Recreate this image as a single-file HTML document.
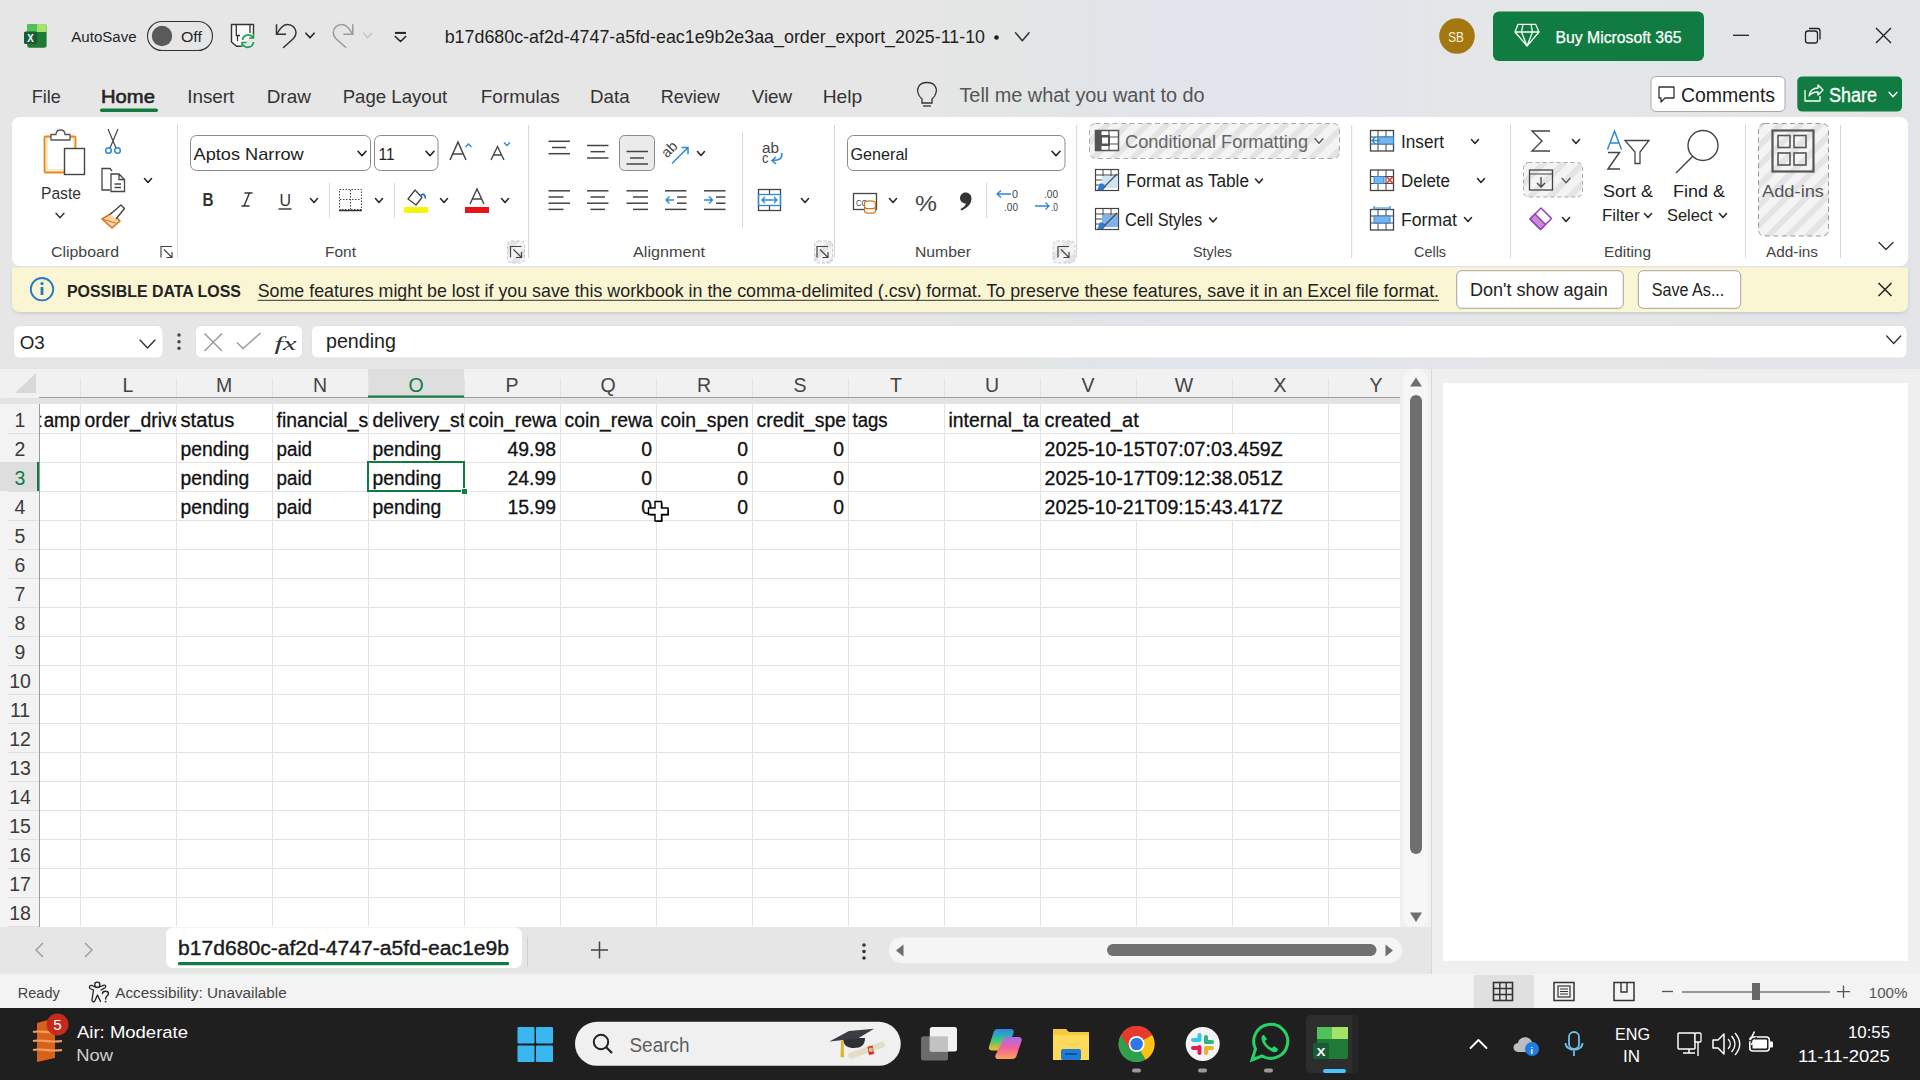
<!DOCTYPE html>
<html><head><meta charset="utf-8"><title>Excel</title><style>html,body{margin:0;padding:0;width:1920px;height:1080px;overflow:hidden;background:#e6e6e6}svg{display:block}</style></head><body>
<svg width="1920" height="1080" viewBox="0 0 1920 1080" font-family="Liberation Sans">
<defs>
<linearGradient id="bg" x1="0" y1="0" x2="1" y2="0">
 <stop offset="0" stop-color="#e6e6e6"/><stop offset="0.46" stop-color="#e6e6e6"/><stop offset="0.52" stop-color="#e3e6e4"/>
 <stop offset="0.6" stop-color="#e1e4ea"/><stop offset="0.7" stop-color="#e2e5eb"/><stop offset="0.8" stop-color="#e5e6e7"/><stop offset="1" stop-color="#e3e4e8"/>
</linearGradient>
<pattern id="stripes" patternUnits="userSpaceOnUse" width="14" height="14" patternTransform="rotate(45)">
 <rect width="14" height="14" fill="#f4f4f4"/><rect width="6" height="14" fill="#e4e4e4"/>
</pattern>
<clipPath id="gridclip"><rect x="39" y="404" width="1361" height="523"/></clipPath>
</defs>
<rect x="0" y="0" width="1920" height="1080" rx="0" fill="url(#bg)" />
<rect x="27.2" y="24" width="19.4" height="23.8" rx="2.5" fill="#1f7a35" />
<rect x="27.2" y="24" width="9.7" height="8" rx="0" fill="#4fc35a" />
<path d="M36.9,24 H44.1 A2.5,2.5 0 0 1 46.6,26.5 V32 H36.9 Z" stroke="none" stroke-width="1" fill="#a5e26a" />
<path d="M29.7,24 H36.9 V32 H27.2 V26.5 A2.5,2.5 0 0 1 29.7,24 Z" stroke="none" stroke-width="1" fill="#52c15b" />
<rect x="24" y="31.6" width="13.2" height="12.4" rx="1.5" fill="#185c37" />
<text x="27.30" y="42" font-size="10.5" fill="#fff" font-family="Liberation Sans" font-weight="bold" textLength="6.47" lengthAdjust="spacingAndGlyphs" >X</text>
<text x="71.25" y="41.9" font-size="15.3" fill="#262626" font-family="Liberation Sans" textLength="65.44" lengthAdjust="spacingAndGlyphs" >AutoSave</text>
<rect x="147.5" y="21.5" width="65" height="29" rx="14.5" fill="none" stroke="#333" stroke-width="1.1" />
<circle cx="162" cy="36" r="10.2" fill="#5a5a5a" />
<text x="181.00" y="41.9" font-size="15.3" fill="#262626" font-family="Liberation Sans" textLength="20.93" lengthAdjust="spacingAndGlyphs" >Off</text>
<path d="M241,46.3 H236.5 L231.5,42 V24.5 H253.5 V34" stroke="#333" stroke-width="1.4" fill="#fafafa" stroke-linejoin="round"/>
<path d="M236.3,24.5 V35.5 H240 M250,24.5 V33" stroke="#333" stroke-width="1.3" fill="none" />
<path d="M237.5,35.5 V41" stroke="#333" stroke-width="1.2" fill="none" />
<path d="M242.5,40 A5.8,5.8 0 0 1 253,37.5 M253.5,42 A5.8,5.8 0 0 1 242.5,44" stroke="#1f9d55" stroke-width="1.7" fill="none" />
<path d="M253.5,33.5 V38 H249 M242,47 V42.5 H246.5" stroke="#1f9d55" stroke-width="1.6" fill="none" />
<path d="M276.5,24.2 V34.3 H286" stroke="#333" stroke-width="1.5" fill="none" stroke-linejoin="miter"/>
<path d="M276.8,34 C280,28 283.5,24.5 287.5,24.5 C292.5,24.5 296,28.5 296,32.5 C296,35.5 295,37 293.5,38.5 L283.5,47.5" stroke="#333" stroke-width="1.5" fill="none" stroke-linecap="round"/>
<path d="M305.85,33.15 L310,37.85 L314.15,33.15" stroke="#222" stroke-width="1.5" fill="none" stroke-linecap="round" stroke-linejoin="round"/>
<path d="M352.8,24.2 V34.3 H343.3" stroke="#999" stroke-width="1.5" fill="none" stroke-linejoin="miter"/>
<path d="M352.5,34 C349.3,28 345.8,24.5 341.8,24.5 C336.8,24.5 333.3,28.5 333.3,32.5 C333.3,35.5 334.3,37 335.8,38.5 L345.8,47.5" stroke="#999" stroke-width="1.5" fill="none" stroke-linecap="round"/>
<path d="M363.5,33.25 L367.5,37.75 L371.5,33.25" stroke="#c4c4c4" stroke-width="1.3" fill="none" stroke-linecap="round" stroke-linejoin="round"/>
<line x1="395" y1="32.9" x2="406" y2="32.9" stroke="#222" stroke-width="2" />
<path d="M395.25,36.5 L400.5,41.5 L405.75,36.5" stroke="#222" stroke-width="1.6" fill="none" stroke-linecap="round" stroke-linejoin="round"/>
<text x="444.70" y="42.8" font-size="18.5" fill="#1f1f1f" font-family="Liberation Sans" textLength="540.30" lengthAdjust="spacingAndGlyphs" >b17d680c-af2d-4747-a5fd-eac1e9b2e3aa_order_export_2025-11-10</text>
<circle cx="996.5" cy="37.5" r="2.3" fill="#1f1f1f" />
<path d="M1015.55,32.8 L1022.3,40.8 L1029.05,32.8" stroke="#333" stroke-width="1.5" fill="none" stroke-linecap="round" stroke-linejoin="round"/>
<circle cx="1457" cy="36" r="17.8" fill="#a47810" />
<text x="1448.30" y="41.8" font-size="15.2" fill="#f7efd8" font-family="Liberation Sans" textLength="15.65" lengthAdjust="spacingAndGlyphs" >SB</text>
<rect x="1493" y="11.4" width="211" height="49.6" rx="6" fill="#117c41" />
<path d="M1518,24.3 H1535.6 L1539,32 L1527,46 L1515,32 Z M1515,32 H1539 M1523,24.3 L1521.5,32 L1527,46 L1532.5,32 L1531,24.3" stroke="#f2fff6" stroke-width="1.3" fill="none" stroke-linejoin="round"/>
<text x="1555.50" y="42.5" font-size="16.5" fill="#fff" font-family="Liberation Sans" textLength="126.05" lengthAdjust="spacingAndGlyphs" stroke="#fff" stroke-width="0.25">Buy Microsoft 365</text>
<line x1="1733" y1="35.3" x2="1749" y2="35.3" stroke="#222" stroke-width="1.3" />
<rect x="1805.5" y="31" width="12" height="12" rx="2.5" fill="none" stroke="#222" stroke-width="1.3" />
<path d="M1809,28.5 H1817.5 A2.5,2.5 0 0 1 1820,31 V39.5" stroke="#222" stroke-width="1.3" fill="none" />
<path d="M1876,28 L1891,43 M1891,28 L1876,43" stroke="#222" stroke-width="1.4" fill="none" />
<text x="31.70" y="102.5" font-size="19" fill="#333" font-family="Liberation Sans" textLength="29.02" lengthAdjust="spacingAndGlyphs" >File</text>
<text x="187.30" y="102.5" font-size="19" fill="#333" font-family="Liberation Sans" textLength="47.01" lengthAdjust="spacingAndGlyphs" >Insert</text>
<text x="266.70" y="102.5" font-size="19" fill="#333" font-family="Liberation Sans" textLength="44.18" lengthAdjust="spacingAndGlyphs" >Draw</text>
<text x="342.70" y="102.5" font-size="19" fill="#333" font-family="Liberation Sans" textLength="104.51" lengthAdjust="spacingAndGlyphs" >Page Layout</text>
<text x="480.80" y="102.5" font-size="19" fill="#333" font-family="Liberation Sans" textLength="78.85" lengthAdjust="spacingAndGlyphs" >Formulas</text>
<text x="590.00" y="102.5" font-size="19" fill="#333" font-family="Liberation Sans" textLength="39.55" lengthAdjust="spacingAndGlyphs" >Data</text>
<text x="660.80" y="102.5" font-size="19" fill="#333" font-family="Liberation Sans" textLength="59.00" lengthAdjust="spacingAndGlyphs" >Review</text>
<text x="751.70" y="102.5" font-size="19" fill="#333" font-family="Liberation Sans" textLength="40.40" lengthAdjust="spacingAndGlyphs" >View</text>
<text x="822.70" y="102.5" font-size="19" fill="#333" font-family="Liberation Sans" textLength="39.53" lengthAdjust="spacingAndGlyphs" >Help</text>
<text x="101.00" y="102.5" font-size="19" fill="#222" font-family="Liberation Sans" textLength="53.95" lengthAdjust="spacingAndGlyphs" stroke="#222" stroke-width="0.55">Home</text>
<rect x="100" y="108.5" width="58" height="3.5" rx="1.7" fill="#107c41" />
<path d="M922,99 C917,95 917,89 918.5,87 C920,83.5 923.5,82.5 927,82.5 C930.5,82.5 934,83.5 935.5,87 C937,89 937,95 932,99 V103 H922 Z" stroke="#333" stroke-width="1.3" fill="none" />
<line x1="923" y1="106" x2="931" y2="106" stroke="#333" stroke-width="1.3" />
<text x="959.40" y="102" font-size="19.5" fill="#555" font-family="Liberation Sans" textLength="245.28" lengthAdjust="spacingAndGlyphs" >Tell me what you want to do</text>
<rect x="1651" y="76.5" width="134" height="35" rx="5" fill="#fff" stroke="#a8a8a8" stroke-width="1" />
<path d="M1659,87 H1674 V98 H1665 L1661,102 V98 H1659 Z" stroke="#333" stroke-width="1.3" fill="none" stroke-linejoin="round"/>
<text x="1681.00" y="102.4" font-size="19.5" fill="#222" font-family="Liberation Sans" textLength="94.08" lengthAdjust="spacingAndGlyphs" >Comments</text>
<rect x="1797.3" y="76.4" width="104.7" height="35.2" rx="5" fill="#117c41" />
<path d="M1805,90 V101 H1820 V96 M1809,96 C1810,90 1814,88 1818,88 V85 L1823,90 L1818,95 V92 C1814,92 1811,93 1809,96 Z" stroke="#fff" stroke-width="1.3" fill="none" stroke-linejoin="round"/>
<text x="1829.00" y="102.4" font-size="19.5" fill="#fff" font-family="Liberation Sans" textLength="47.97" lengthAdjust="spacingAndGlyphs" stroke="#fff" stroke-width="0.3">Share</text>
<path d="M1889.0,92.25 L1893,96.75 L1897.0,92.25" stroke="#fff" stroke-width="1.4" fill="none" stroke-linecap="round" stroke-linejoin="round"/>
<rect x="12" y="117" width="1896" height="149" rx="8" fill="#ffffff" />
<line x1="177.5" y1="125" x2="177.5" y2="258" stroke="#d6d6d6" stroke-width="1" />
<line x1="528.7" y1="125" x2="528.7" y2="258" stroke="#d6d6d6" stroke-width="1" />
<line x1="834.5" y1="125" x2="834.5" y2="258" stroke="#d6d6d6" stroke-width="1" />
<line x1="1076.7" y1="125" x2="1076.7" y2="258" stroke="#d6d6d6" stroke-width="1" />
<line x1="1351.7" y1="125" x2="1351.7" y2="258" stroke="#d6d6d6" stroke-width="1" />
<line x1="1510.5" y1="125" x2="1510.5" y2="258" stroke="#d6d6d6" stroke-width="1" />
<line x1="1745.5" y1="125" x2="1745.5" y2="258" stroke="#d6d6d6" stroke-width="1" />
<line x1="1840.5" y1="125" x2="1840.5" y2="258" stroke="#d6d6d6" stroke-width="1" />
<text x="51.00" y="256.7" font-size="15.3" fill="#444" font-family="Liberation Sans" textLength="68.00" lengthAdjust="spacingAndGlyphs" >Clipboard</text>
<text x="325.00" y="256.7" font-size="15.3" fill="#444" font-family="Liberation Sans" textLength="31.01" lengthAdjust="spacingAndGlyphs" >Font</text>
<text x="633.00" y="256.7" font-size="15.3" fill="#444" font-family="Liberation Sans" textLength="71.94" lengthAdjust="spacingAndGlyphs" >Alignment</text>
<text x="915.00" y="256.7" font-size="15.3" fill="#444" font-family="Liberation Sans" textLength="55.94" lengthAdjust="spacingAndGlyphs" >Number</text>
<text x="1193.00" y="256.7" font-size="15.3" fill="#444" font-family="Liberation Sans" textLength="39.04" lengthAdjust="spacingAndGlyphs" >Styles</text>
<text x="1414.00" y="256.7" font-size="15.3" fill="#444" font-family="Liberation Sans" textLength="32.04" lengthAdjust="spacingAndGlyphs" >Cells</text>
<text x="1604.00" y="256.7" font-size="15.3" fill="#444" font-family="Liberation Sans" textLength="46.96" lengthAdjust="spacingAndGlyphs" >Editing</text>
<text x="1766.00" y="256.7" font-size="15.3" fill="#444" font-family="Liberation Sans" textLength="52.01" lengthAdjust="spacingAndGlyphs" >Add-ins</text>
<path d="M161,257.5 V246.5 H172" stroke="#444" stroke-width="1.2" fill="none" />
<path d="M164,249.5 L172,257.5 M172,252.0 V257.5 H166.5" stroke="#444" stroke-width="1.2" fill="none" />
<rect x="507.5" y="241" width="17" height="22" rx="4" fill="url(#stripes)" stroke="#bbb" stroke-width="0.8" stroke-dasharray="3,2"/>
<path d="M510.5,257.5 V246.5 H521.5" stroke="#444" stroke-width="1.2" fill="none" />
<path d="M513.5,249.5 L521.5,257.5 M521.5,252.0 V257.5 H516.0" stroke="#444" stroke-width="1.2" fill="none" />
<rect x="814.5" y="241" width="18" height="22" rx="4" fill="url(#stripes)" stroke="#bbb" stroke-width="0.8" stroke-dasharray="3,2"/>
<path d="M817,257.5 V246.5 H828" stroke="#444" stroke-width="1.2" fill="none" />
<path d="M820,249.5 L828,257.5 M828,252.0 V257.5 H822.5" stroke="#444" stroke-width="1.2" fill="none" />
<rect x="1053" y="241" width="22" height="22" rx="4" fill="url(#stripes)" stroke="#bbb" stroke-width="0.8" stroke-dasharray="3,2"/>
<path d="M1058,257.5 V246.5 H1069" stroke="#444" stroke-width="1.2" fill="none" />
<path d="M1061,249.5 L1069,257.5 M1069,252.0 V257.5 H1063.5" stroke="#444" stroke-width="1.2" fill="none" />
<rect x="44.5" y="136.5" width="31" height="36" rx="1" fill="#fde9c4" stroke="#e8891c" stroke-width="1.8" />
<rect x="48" y="139" width="25" height="30" rx="0" fill="#fff" stroke="none" stroke-width="1" />
<path d="M51,140 V134.5 H56 C56,131 58,130 60.5,130 C63,130 65,131 65,134.5 H70 V140 Z" stroke="#555" stroke-width="1.3" fill="#fff" />
<rect x="64.5" y="148.5" width="20" height="26" rx="0" fill="#fff" stroke="#444" stroke-width="1.4" />
<text x="41.00" y="198.7" font-size="16.8" fill="#333" font-family="Liberation Sans" textLength="39.95" lengthAdjust="spacingAndGlyphs" >Paste</text>
<path d="M56.0,213.25 L60,217.75 L64.0,213.25" stroke="#333" stroke-width="1.4" fill="none" stroke-linecap="round" stroke-linejoin="round"/>
<path d="M108,129 L116,148 M118,129 L110,148" stroke="#444" stroke-width="1.2" fill="none" />
<circle cx="108.5" cy="150.5" r="2.8" fill="none" stroke="#2b88d8" stroke-width="1.5" />
<circle cx="117.5" cy="150.5" r="2.8" fill="none" stroke="#2b88d8" stroke-width="1.5" />
<path d="M110,190 H102 V168.5 H110 L112,171" stroke="#444" stroke-width="1.3" fill="none" />
<path d="M111,174 H119 L124.5,179.5 V191.5 H111 Z M119,174 V179.5 H124.5 M114.5,184 H121 M114.5,187.5 H121" stroke="#444" stroke-width="1.3" fill="none" />
<path d="M144.5,178.5 L148,182.5 L151.5,178.5" stroke="#2a2a2a" stroke-width="1.6" fill="none" stroke-linecap="round" stroke-linejoin="round"/>
<path d="M102,219 L112,213 L120,221 L112,228 Z" stroke="#d9731f" stroke-width="1.6" fill="#fbd3a6" stroke-linejoin="round"/>
<path d="M110,214.5 L121,205 L124.5,208.5 L116,219" stroke="#444" stroke-width="1.4" fill="#fff" stroke-linejoin="round"/>
<path d="M103,219.5 L116,223" stroke="#d9731f" stroke-width="1.2" fill="none" />
<rect x="190.5" y="135.5" width="180" height="35" rx="6" fill="#fff" stroke="#8a8a8a" stroke-width="1" />
<text x="193.50" y="159.7" font-size="17" fill="#222" font-family="Liberation Sans" textLength="110.27" lengthAdjust="spacingAndGlyphs" >Aptos Narrow</text>
<path d="M358.0,151.25 L362,155.75 L366.0,151.25" stroke="#222" stroke-width="1.6" fill="none" stroke-linecap="round" stroke-linejoin="round"/>
<rect x="374.5" y="135.5" width="63.5" height="35" rx="6" fill="#fff" stroke="#8a8a8a" stroke-width="1" />
<text x="378.50" y="159.7" font-size="17" fill="#222" font-family="Liberation Sans" textLength="15.97" lengthAdjust="spacingAndGlyphs" >11</text>
<path d="M426.0,151.25 L430,155.75 L434.0,151.25" stroke="#222" stroke-width="1.6" fill="none" stroke-linecap="round" stroke-linejoin="round"/>
<path d="M450,160 L458,142 L466,160 M452.5,154 H463.5" stroke="#444" stroke-width="1.5" fill="none" />
<path d="M465.5,147 L468.5,144 L471.5,147" stroke="#2b88d8" stroke-width="1.4" fill="none" />
<path d="M491,160 L497.5,146.5 L504,160 M493,155 H502" stroke="#444" stroke-width="1.4" fill="none" />
<path d="M504,142.5 L507,145.5 L510,142.5" stroke="#2b88d8" stroke-width="1.4" fill="none" />
<text x="202.50" y="206.3" font-size="18" fill="#333" font-family="Liberation Sans" font-weight="bold" textLength="11.03" lengthAdjust="spacingAndGlyphs" >B</text>
<path d="M244.5,193 H252.5 M241.5,206 H249.5 M249.5,193 L244,206" stroke="#333" stroke-width="1.4" fill="none" />
<text x="279.50" y="206" font-size="17" fill="#333" font-family="Liberation Sans" textLength="11.53" lengthAdjust="spacingAndGlyphs" >U</text>
<line x1="278.5" y1="209" x2="291.5" y2="209" stroke="#333" stroke-width="1.4" />
<path d="M310.5,198.5 L314,202.5 L317.5,198.5" stroke="#2a2a2a" stroke-width="1.6" fill="none" stroke-linecap="round" stroke-linejoin="round"/>
<line x1="329.5" y1="183" x2="329.5" y2="218" stroke="#d6d6d6" stroke-width="1" />
<rect x="339.5" y="189.5" width="22" height="20" rx="0" fill="none" stroke="#444" stroke-width="1" stroke-dasharray="1.5,1.5"/>
<path d="M350.5,190 V209 M340,199.5 H361" stroke="#444" stroke-width="1" fill="none" stroke-dasharray="1.5,1.5"/>
<line x1="339" y1="210.5" x2="362" y2="210.5" stroke="#333" stroke-width="1.5" />
<path d="M375.5,198.5 L379,202.5 L382.5,198.5" stroke="#2a2a2a" stroke-width="1.6" fill="none" stroke-linecap="round" stroke-linejoin="round"/>
<line x1="394.5" y1="183" x2="394.5" y2="218" stroke="#d6d6d6" stroke-width="1" />
<path d="M408,199 L415,190 L422,197.5 L416,205 Z" stroke="#444" stroke-width="1.3" fill="#fff" stroke-linejoin="round"/>
<path d="M420,196 C423,193 425,194 425.5,198.5" stroke="#1f6fc2" stroke-width="1.8" fill="none" />
<rect x="404" y="207" width="24" height="6" rx="0" fill="#f5f50a" />
<path d="M440.5,198.5 L444,202.5 L447.5,198.5" stroke="#2a2a2a" stroke-width="1.6" fill="none" stroke-linecap="round" stroke-linejoin="round"/>
<path d="M470,204 L477,189 L484,204 M472.5,199 H481.5" stroke="#444" stroke-width="1.4" fill="none" />
<rect x="465" y="207" width="24" height="6" rx="0" fill="#e8111a" />
<path d="M501.5,198.5 L505,202.5 L508.5,198.5" stroke="#2a2a2a" stroke-width="1.6" fill="none" stroke-linecap="round" stroke-linejoin="round"/>
<line x1="548.5" y1="141.3" x2="570" y2="141.3" stroke="#444" stroke-width="1.5" />
<line x1="552" y1="147.5" x2="566" y2="147.5" stroke="#444" stroke-width="1.5" />
<line x1="548.5" y1="153.7" x2="570" y2="153.7" stroke="#444" stroke-width="1.5" />
<line x1="587" y1="145.5" x2="608.5" y2="145.5" stroke="#444" stroke-width="1.5" />
<line x1="590.5" y1="151.7" x2="605" y2="151.7" stroke="#444" stroke-width="1.5" />
<line x1="587" y1="158" x2="608.5" y2="158" stroke="#444" stroke-width="1.5" />
<rect x="619.5" y="135.5" width="35" height="35" rx="5" fill="#ebebeb" stroke="#8a8a8a" stroke-width="1" />
<line x1="626.5" y1="151.5" x2="648" y2="151.5" stroke="#444" stroke-width="1.5" />
<line x1="630" y1="158" x2="644" y2="158" stroke="#444" stroke-width="1.5" />
<line x1="626.5" y1="164" x2="648" y2="164" stroke="#444" stroke-width="1.5" />
<text x="667" y="158.5" font-size="14.5" fill="#444" font-family="Liberation Sans" transform="rotate(-45 667 158.5)">ab</text>
<path d="M672,163.5 L688,147.5 M681.5,147.5 H688 V154" stroke="#2b88d8" stroke-width="1.5" fill="none" />
<path d="M697.5,151.5 L701,155.5 L704.5,151.5" stroke="#2a2a2a" stroke-width="1.6" fill="none" stroke-linecap="round" stroke-linejoin="round"/>
<line x1="742.5" y1="133" x2="742.5" y2="227" stroke="#d6d6d6" stroke-width="1" />
<text x="762.00" y="152.5" font-size="14" fill="#444" font-family="Liberation Sans" textLength="17.03" lengthAdjust="spacingAndGlyphs" >ab</text>
<text x="762.00" y="163" font-size="14" fill="#444" font-family="Liberation Sans" textLength="6.50" lengthAdjust="spacingAndGlyphs" >c</text>
<path d="M781.5,153 C783,157.5 780,160.5 772.5,160.5 M776,157 L772,160.5 L776,164" stroke="#2b88d8" stroke-width="1.5" fill="none" />
<line x1="548.5" y1="190.8" x2="570.0" y2="190.8" stroke="#444" stroke-width="1.5" />
<line x1="548.5" y1="197" x2="563.5" y2="197" stroke="#444" stroke-width="1.5" />
<line x1="548.5" y1="203.2" x2="570.0" y2="203.2" stroke="#444" stroke-width="1.5" />
<line x1="548.5" y1="209.4" x2="563.5" y2="209.4" stroke="#444" stroke-width="1.5" />
<line x1="587" y1="190.8" x2="608.5" y2="190.8" stroke="#444" stroke-width="1.5" />
<line x1="590.5" y1="197" x2="605" y2="197" stroke="#444" stroke-width="1.5" />
<line x1="587" y1="203.2" x2="608.5" y2="203.2" stroke="#444" stroke-width="1.5" />
<line x1="590.5" y1="209.4" x2="605" y2="209.4" stroke="#444" stroke-width="1.5" />
<line x1="626.5" y1="190.8" x2="648.0" y2="190.8" stroke="#444" stroke-width="1.5" />
<line x1="633.0" y1="197" x2="648.0" y2="197" stroke="#444" stroke-width="1.5" />
<line x1="626.5" y1="203.2" x2="648.0" y2="203.2" stroke="#444" stroke-width="1.5" />
<line x1="633.0" y1="209.4" x2="648.0" y2="209.4" stroke="#444" stroke-width="1.5" />
<line x1="665" y1="190.8" x2="686.5" y2="190.8" stroke="#444" stroke-width="1.5" />
<line x1="677" y1="197" x2="686.5" y2="197" stroke="#444" stroke-width="1.5" />
<line x1="677" y1="203.2" x2="686.5" y2="203.2" stroke="#444" stroke-width="1.5" />
<line x1="665" y1="209.4" x2="686.5" y2="209.4" stroke="#444" stroke-width="1.5" />
<path d="M674,200 H666 M669.5,196.5 L666,200 L669.5,203.5" stroke="#2b88d8" stroke-width="1.4" fill="none" />
<line x1="704" y1="190.8" x2="725.5" y2="190.8" stroke="#444" stroke-width="1.5" />
<line x1="716" y1="197" x2="725.5" y2="197" stroke="#444" stroke-width="1.5" />
<line x1="716" y1="203.2" x2="725.5" y2="203.2" stroke="#444" stroke-width="1.5" />
<line x1="704" y1="209.4" x2="725.5" y2="209.4" stroke="#444" stroke-width="1.5" />
<path d="M704,200 H712.5 M709,196.5 L712.5,200 L709,203.5" stroke="#2b88d8" stroke-width="1.4" fill="none" />
<rect x="758.5" y="189.5" width="22" height="21" rx="0" fill="#fff" stroke="#444" stroke-width="1.3" />
<path d="M758.5,194.5 H780.5 M758.5,205.5 H780.5 M769.5,189.5 V194.5 M769.5,205.5 V210.5" stroke="#444" stroke-width="1.2" fill="none" />
<rect x="758.5" y="194.5" width="22" height="11" rx="0" fill="none" stroke="#2b88d8" stroke-width="1.3" />
<path d="M762,200 H777 M765,197 L762,200 L765,203 M774,197 L777,200 L774,203" stroke="#2b88d8" stroke-width="1.3" fill="none" />
<path d="M801.5,198.5 L805,202.5 L808.5,198.5" stroke="#2a2a2a" stroke-width="1.6" fill="none" stroke-linecap="round" stroke-linejoin="round"/>
<rect x="847.5" y="135.5" width="217.5" height="35" rx="6" fill="#fff" stroke="#8a8a8a" stroke-width="1" />
<text x="850.50" y="159.7" font-size="17" fill="#222" font-family="Liberation Sans" textLength="57.46" lengthAdjust="spacingAndGlyphs" >General</text>
<path d="M1052.0,151.25 L1056,155.75 L1060.0,151.25" stroke="#222" stroke-width="1.6" fill="none" stroke-linecap="round" stroke-linejoin="round"/>
<rect x="853.5" y="193.5" width="23" height="16" rx="0" fill="none" stroke="#444" stroke-width="1.3" />
<text x="856.00" y="206" font-size="9" fill="#444" font-family="Liberation Sans" textLength="11.03" lengthAdjust="spacingAndGlyphs" >CC</text>
<path d="M864.5,203 a5,2 0 0 1 11,0 V211 a5,2 0 0 1 -11,0 Z M864.5,206.5 a5,2 0 0 0 11,0" stroke="#d9731f" stroke-width="1.3" fill="#fff" />
<path d="M889.5,198.5 L893,202.5 L896.5,198.5" stroke="#2a2a2a" stroke-width="1.6" fill="none" stroke-linecap="round" stroke-linejoin="round"/>
<text x="915.00" y="211" font-size="22" fill="#444" font-family="Liberation Sans" textLength="21.98" lengthAdjust="spacingAndGlyphs" >%</text>
<path d="M965.5,192.5 C969,192.5 971.5,195 971.5,198.5 C971.5,204 967,208.5 961,210.5 L960.5,209 C963.5,207.5 965.5,205.5 966,203.5 C962.5,203.5 960,201 960,198 C960,195 962.5,192.5 965.5,192.5 Z" stroke="none" stroke-width="1" fill="#333" />
<line x1="986.7" y1="183" x2="986.7" y2="218" stroke="#d6d6d6" stroke-width="1" />
<text x="1012.00" y="198" font-size="10" fill="#444" font-family="Liberation Sans" textLength="5.96" lengthAdjust="spacingAndGlyphs" >0</text>
<text x="1004.00" y="211" font-size="10" fill="#444" font-family="Liberation Sans" textLength="14.00" lengthAdjust="spacingAndGlyphs" >.00</text>
<path d="M1011,194 H997 M1001,190.5 L997,194 L1001,197.5" stroke="#2b88d8" stroke-width="1.3" fill="none" />
<text x="1044.00" y="198" font-size="10" fill="#444" font-family="Liberation Sans" textLength="14.00" lengthAdjust="spacingAndGlyphs" >.00</text>
<text x="1051.00" y="211" font-size="10" fill="#444" font-family="Liberation Sans" textLength="7.03" lengthAdjust="spacingAndGlyphs" >.0</text>
<path d="M1035,206 H1049 M1045.5,202.5 L1049,206 L1045.5,209.5" stroke="#2b88d8" stroke-width="1.3" fill="none" />
<rect x="1089.5" y="123.5" width="250" height="35" rx="6" fill="url(#stripes)" stroke="#aaa" stroke-width="1" stroke-dasharray="5,3.5"/>
<rect x="1095.5" y="130.5" width="23" height="20" rx="0" fill="#fff" stroke="#555" stroke-width="1.5" />
<rect x="1095.5" y="130.5" width="6" height="20" rx="0" fill="#555" />
<rect x="1101" y="136" width="8" height="9" rx="0" fill="#fff" stroke="#555" stroke-width="2" />
<path d="M1109,130.5 V150.5 M1095.5,137 H1118.5 M1095.5,144 H1118.5" stroke="#555" stroke-width="1.2" fill="none" />
<text x="1125.00" y="147.5" font-size="17.5" fill="#666" font-family="Liberation Sans" textLength="183.00" lengthAdjust="spacingAndGlyphs" >Conditional Formatting</text>
<path d="M1315.0,138.75 L1319,143.25 L1323.0,138.75" stroke="#555" stroke-width="1.3" fill="none" stroke-linecap="round" stroke-linejoin="round"/>
<rect x="1095.5" y="169.5" width="23" height="21" rx="0" fill="#fff" stroke="#444" stroke-width="1.2" />
<path d="M1095.5,175 H1118.5 M1095.5,180 H1103 M1095.5,185 H1101 M1103,169.5 V190.5 M1111,169.5 V177" stroke="#444" stroke-width="1" fill="none" />
<rect x="1102" y="176" width="16" height="12" rx="0" fill="#cfe3f7" />
<path d="M1099,189 C1103,190 1105,187 1106,185 L1117,174" stroke="#444" stroke-width="1.2" fill="none" />
<path d="M1097,190 C1101,191 1105,189 1105,185 L1101,183 C1098,185 1099,188 1097,190 Z" stroke="none" stroke-width="1" fill="#2b7cd3" />
<text x="1126.00" y="187" font-size="17.5" fill="#222" font-family="Liberation Sans" textLength="123.01" lengthAdjust="spacingAndGlyphs" >Format as Table</text>
<path d="M1255.5,179.0 L1259,183.0 L1262.5,179.0" stroke="#2a2a2a" stroke-width="1.6" fill="none" stroke-linecap="round" stroke-linejoin="round"/>
<rect x="1095.5" y="208.5" width="23" height="21" rx="0" fill="#fff" stroke="#444" stroke-width="1.2" />
<path d="M1095.5,214 H1118.5 M1095.5,219 H1103 M1095.5,224 H1101 M1103,208.5 V229.5 M1111,208.5 V216" stroke="#444" stroke-width="1" fill="none" />
<rect x="1102" y="215" width="16" height="12" rx="0" fill="#7db3ea" />
<path d="M1099,228 C1103,229 1105,226 1106,224 L1117,213" stroke="#444" stroke-width="1.2" fill="none" />
<path d="M1097,229 C1101,230 1105,228 1105,224 L1101,222 C1098,224 1099,227 1097,229 Z" stroke="none" stroke-width="1" fill="#2b7cd3" />
<text x="1125.00" y="225.8" font-size="17.5" fill="#222" font-family="Liberation Sans" textLength="77.06" lengthAdjust="spacingAndGlyphs" >Cell Styles</text>
<path d="M1209.5,218.0 L1213,222.0 L1216.5,218.0" stroke="#2a2a2a" stroke-width="1.6" fill="none" stroke-linecap="round" stroke-linejoin="round"/>
<rect x="1370.5" y="130.5" width="23" height="20.5" rx="0" fill="#fff" stroke="#444" stroke-width="1.3" />
<path d="M1370.5,137 H1393.5 M1370.5,144 H1393.5 M1378,130.5 V151 M1386,130.5 V151" stroke="#444" stroke-width="1" fill="none" />
<rect x="1378" y="137" width="15.5" height="7" rx="0" fill="#79b4ea" stroke="#2b88d8" stroke-width="1" />
<path d="M1380,140.5 H1372 M1375.5,137 L1372,140.5 L1375.5,144" stroke="#2b88d8" stroke-width="1.5" fill="none" />
<text x="1401.00" y="148" font-size="17.5" fill="#222" font-family="Liberation Sans" textLength="43.01" lengthAdjust="spacingAndGlyphs" >Insert</text>
<path d="M1471.5,139.5 L1475,143.5 L1478.5,139.5" stroke="#2a2a2a" stroke-width="1.6" fill="none" stroke-linecap="round" stroke-linejoin="round"/>
<rect x="1370.5" y="170.0" width="23" height="20.5" rx="0" fill="#fff" stroke="#444" stroke-width="1.3" />
<path d="M1370.5,176.5 H1393.5 M1370.5,183.5 H1393.5 M1378,170.0 V190.5 M1386,170.0 V190.5" stroke="#444" stroke-width="1" fill="none" />
<rect x="1374" y="176.5" width="10" height="7" rx="0" fill="#79b4ea" stroke="#2b88d8" stroke-width="1" />
<path d="M1386.5,176.5 L1393,183.5 M1393,176.5 L1386.5,183.5" stroke="#e03b3b" stroke-width="1.5" fill="none" />
<text x="1401.00" y="187" font-size="17.5" fill="#222" font-family="Liberation Sans" textLength="49.01" lengthAdjust="spacingAndGlyphs" >Delete</text>
<path d="M1477.5,178.5 L1481,182.5 L1484.5,178.5" stroke="#2a2a2a" stroke-width="1.6" fill="none" stroke-linecap="round" stroke-linejoin="round"/>
<rect x="1370.5" y="209.5" width="23" height="20.5" rx="0" fill="#fff" stroke="#444" stroke-width="1.3" />
<path d="M1370.5,216 H1393.5 M1370.5,223 H1393.5 M1378,209.5 V230 M1386,209.5 V230" stroke="#444" stroke-width="1" fill="none" />
<rect x="1378" y="216" width="8.0" height="7" rx="0" fill="#79b4ea" />
<rect x="1374" y="216" width="16" height="7" rx="0" fill="#79b4ea" stroke="#2b88d8" stroke-width="1" />
<path d="M1374,206 V210 M1390,206 V210 M1374,208 H1390" stroke="#2b88d8" stroke-width="1.2" fill="none" />
<text x="1401.00" y="226" font-size="17.5" fill="#222" font-family="Liberation Sans" textLength="55.94" lengthAdjust="spacingAndGlyphs" >Format</text>
<path d="M1464.5,217.5 L1468,221.5 L1471.5,217.5" stroke="#2a2a2a" stroke-width="1.6" fill="none" stroke-linecap="round" stroke-linejoin="round"/>
<path d="M1550,131 H1532 L1542,141 L1532,151 H1550" stroke="#444" stroke-width="1.4" fill="none" stroke-linejoin="miter"/>
<path d="M1572.5,139.5 L1576,143.5 L1579.5,139.5" stroke="#2a2a2a" stroke-width="1.6" fill="none" stroke-linecap="round" stroke-linejoin="round"/>
<rect x="1523.5" y="162.5" width="59" height="34.5" rx="5" fill="url(#stripes)" stroke="#aaa" stroke-width="1" stroke-dasharray="4,3"/>
<rect x="1529.5" y="170" width="23" height="20" rx="0" fill="none" stroke="#444" stroke-width="1.3" />
<line x1="1529.5" y1="174" x2="1552.5" y2="174" stroke="#444" stroke-width="1" />
<path d="M1541,177 V187 M1537,183 L1541,187 L1545,183" stroke="#444" stroke-width="1.3" fill="none" />
<path d="M1562.0,178.25 L1566,182.75 L1570.0,178.25" stroke="#555" stroke-width="1.2" fill="none" stroke-linecap="round" stroke-linejoin="round"/>
<path d="M1530,219 L1541,208 L1551.5,218.5 L1540.5,229.5 Z" stroke="#9b3fb5" stroke-width="1.5" fill="#fff" stroke-linejoin="round"/>
<path d="M1530,219 L1535,214 L1545.5,224.5 L1540.5,229.5 Z" stroke="#9b3fb5" stroke-width="1.5" fill="#c98ad9" stroke-linejoin="round"/>
<path d="M1562.5,217.5 L1566,221.5 L1569.5,217.5" stroke="#2a2a2a" stroke-width="1.6" fill="none" stroke-linecap="round" stroke-linejoin="round"/>
<path d="M1607.5,149.5 L1614.5,131 L1621.5,149.5 M1610,143 H1619" stroke="#2b88d8" stroke-width="1.5" fill="none" />
<path d="M1608,152.5 H1619.5 L1608,169 H1620" stroke="#444" stroke-width="1.5" fill="none" />
<path d="M1625,140.5 H1649 L1640,152 V163.5 H1635 V152 Z" stroke="#444" stroke-width="1.3" fill="none" stroke-linejoin="miter"/>
<text x="1603.00" y="196.7" font-size="17" fill="#222" font-family="Liberation Sans" textLength="49.98" lengthAdjust="spacingAndGlyphs" >Sort &amp;</text>
<text x="1602.00" y="221" font-size="17" fill="#222" font-family="Liberation Sans" textLength="37.53" lengthAdjust="spacingAndGlyphs" >Filter</text>
<path d="M1644.5,213.5 L1648,217.5 L1651.5,213.5" stroke="#2a2a2a" stroke-width="1.6" fill="none" stroke-linecap="round" stroke-linejoin="round"/>
<circle cx="1703" cy="145.5" r="15" fill="none" stroke="#444" stroke-width="1.4" />
<line x1="1692.5" y1="156.5" x2="1676" y2="173" stroke="#444" stroke-width="1.4" />
<text x="1673.00" y="197" font-size="17" fill="#222" font-family="Liberation Sans" textLength="52.00" lengthAdjust="spacingAndGlyphs" >Find &amp;</text>
<text x="1667.00" y="221" font-size="17" fill="#222" font-family="Liberation Sans" textLength="45.49" lengthAdjust="spacingAndGlyphs" >Select</text>
<path d="M1719.5,213.5 L1723,217.5 L1726.5,213.5" stroke="#2a2a2a" stroke-width="1.6" fill="none" stroke-linecap="round" stroke-linejoin="round"/>
<rect x="1758.5" y="123.5" width="70" height="112.5" rx="6" fill="url(#stripes)" stroke="#999" stroke-width="1" stroke-dasharray="5,3.5"/>
<rect x="1772.5" y="130.5" width="41" height="41" rx="0" fill="none" stroke="#555" stroke-width="2.2" />
<rect x="1778" y="135.5" width="12" height="12" rx="0" fill="none" stroke="#555" stroke-width="1.6" />
<rect x="1794" y="135.5" width="12" height="12" rx="0" fill="none" stroke="#555" stroke-width="1.6" />
<rect x="1778" y="153" width="12" height="12" rx="0" fill="none" stroke="#555" stroke-width="1.6" />
<rect x="1794" y="153" width="12" height="12" rx="0" fill="none" stroke="#555" stroke-width="1.6" />
<text x="1762.00" y="197" font-size="17" fill="#555" font-family="Liberation Sans" textLength="62.01" lengthAdjust="spacingAndGlyphs" >Add-ins</text>
<path d="M1879.0,242.5 L1886,249.5 L1893.0,242.5" stroke="#333" stroke-width="1.4" fill="none" stroke-linecap="round" stroke-linejoin="round"/>
<filter id="sh" x="-5%" y="-50%" width="110%" height="200%"><feDropShadow dx="0" dy="1.5" stdDeviation="1.5" flood-color="#000" flood-opacity="0.12"/></filter>
<path d="M12,267.5 H1908 V304 A8,8 0 0 1 1900,312 H20 A8,8 0 0 1 12,304 Z" stroke="none" stroke-width="1" fill="#faf6d4" filter="url(#sh)"/>
<circle cx="42" cy="289.2" r="11.2" fill="none" stroke="#2178c4" stroke-width="1.8" />
<rect x="40.6" y="287" width="2.8" height="8" rx="0" fill="#2178c4" />
<circle cx="42" cy="283.6" r="1.6" fill="#2178c4" />
<text x="67.00" y="296.7" font-size="16" fill="#222" font-family="Liberation Sans" font-weight="bold" textLength="173.95" lengthAdjust="spacingAndGlyphs" >POSSIBLE DATA LOSS</text>
<text x="257.70" y="296.7" font-size="17.8" fill="#222" font-family="Liberation Sans" textLength="1181.36" lengthAdjust="spacingAndGlyphs" >Some features might be lost if you save this workbook in the comma-delimited (.csv) format. To preserve these features, save it in an Excel file format.</text>
<line x1="257.7" y1="300.3" x2="1439" y2="300.3" stroke="#333" stroke-width="1" />
<rect x="1456.7" y="270.7" width="166.6" height="37.6" rx="5" fill="#fff" stroke="#a0a0a0" stroke-width="1" />
<text x="1470.00" y="296" font-size="17.5" fill="#222" font-family="Liberation Sans" textLength="137.69" lengthAdjust="spacingAndGlyphs" >Don't show again</text>
<rect x="1638.3" y="270.7" width="102.4" height="37.6" rx="5" fill="#fff" stroke="#a0a0a0" stroke-width="1" />
<text x="1651.70" y="296" font-size="17.5" fill="#222" font-family="Liberation Sans" textLength="72.64" lengthAdjust="spacingAndGlyphs" >Save As...</text>
<path d="M1878.5,283 L1891.5,296 M1891.5,283 L1878.5,296" stroke="#222" stroke-width="1.5" fill="none" />
<rect x="13.5" y="325.5" width="149.5" height="32.5" rx="6" fill="#fff" stroke="#e2e2e2" stroke-width="1" />
<text x="19.70" y="348.7" font-size="18" fill="#222" font-family="Liberation Sans" textLength="25.07" lengthAdjust="spacingAndGlyphs" >O3</text>
<path d="M140.0,340.0 L147.5,348.0 L155.0,340.0" stroke="#333" stroke-width="1.4" fill="none" stroke-linecap="round" stroke-linejoin="round"/>
<circle cx="179" cy="335" r="1.7" fill="#444" />
<circle cx="179" cy="341.7" r="1.7" fill="#444" />
<circle cx="179" cy="348.3" r="1.7" fill="#444" />
<rect x="195.5" y="325.5" width="107" height="32.5" rx="6" fill="#fff" stroke="#e2e2e2" stroke-width="1" />
<path d="M204.5,333.5 L222,351 M222,333.5 L204.5,351" stroke="#9a9a9a" stroke-width="1.5" fill="none" />
<path d="M237,342.5 L243,348.5 L260.5,333" stroke="#9a9a9a" stroke-width="1.5" fill="none" />
<text x="274.50" y="350" font-size="19" fill="#333" font-family="Liberation Serif" textLength="21.94" lengthAdjust="spacingAndGlyphs" font-style="italic">fx</text>
<rect x="311.5" y="325.5" width="1595.5" height="32.5" rx="6" fill="#fff" stroke="#e2e2e2" stroke-width="1" />
<text x="326.00" y="348.3" font-size="19.3" fill="#222" font-family="Liberation Sans" textLength="69.98" lengthAdjust="spacingAndGlyphs" >pending</text>
<path d="M1886.7,335.95 L1893.7,343.45 L1900.7,335.95" stroke="#333" stroke-width="1.4" fill="none" stroke-linecap="round" stroke-linejoin="round"/>
<rect x="0" y="369" width="1400" height="29" rx="0" fill="#f1f1f1" />
<rect x="368" y="369" width="96" height="29" rx="0" fill="#dedede" />
<rect x="0" y="398" width="1400" height="6.4" rx="0" fill="#e3e3e3" />
<rect x="0" y="404" width="39" height="523" rx="0" fill="#f3f3f3" />
<rect x="0" y="462" width="39" height="29" rx="0" fill="#dedede" />
<path d="M36,373 V393 H15 Z" stroke="none" stroke-width="1" fill="#d8d8d8" />
<line x1="80.5" y1="379" x2="80.5" y2="397" stroke="#e3e3e3" stroke-width="1" />
<line x1="176.5" y1="379" x2="176.5" y2="397" stroke="#e3e3e3" stroke-width="1" />
<line x1="272.5" y1="379" x2="272.5" y2="397" stroke="#e3e3e3" stroke-width="1" />
<line x1="368.5" y1="379" x2="368.5" y2="397" stroke="#e3e3e3" stroke-width="1" />
<line x1="464.5" y1="379" x2="464.5" y2="397" stroke="#e3e3e3" stroke-width="1" />
<line x1="560.5" y1="379" x2="560.5" y2="397" stroke="#e3e3e3" stroke-width="1" />
<line x1="656.5" y1="379" x2="656.5" y2="397" stroke="#e3e3e3" stroke-width="1" />
<line x1="752.5" y1="379" x2="752.5" y2="397" stroke="#e3e3e3" stroke-width="1" />
<line x1="848.5" y1="379" x2="848.5" y2="397" stroke="#e3e3e3" stroke-width="1" />
<line x1="944.5" y1="379" x2="944.5" y2="397" stroke="#e3e3e3" stroke-width="1" />
<line x1="1040.5" y1="379" x2="1040.5" y2="397" stroke="#e3e3e3" stroke-width="1" />
<line x1="1136.5" y1="379" x2="1136.5" y2="397" stroke="#e3e3e3" stroke-width="1" />
<line x1="1232.5" y1="379" x2="1232.5" y2="397" stroke="#e3e3e3" stroke-width="1" />
<line x1="1328.5" y1="379" x2="1328.5" y2="397" stroke="#e3e3e3" stroke-width="1" />
<line x1="39" y1="397.5" x2="1400" y2="397.5" stroke="#a0a0a0" stroke-width="1" />
<line x1="368" y1="396.5" x2="464" y2="396.5" stroke="#107c41" stroke-width="2.2" />
<text x="128" y="391.7" font-size="19.5" fill="#444" font-family="Liberation Sans" text-anchor="middle" >L</text>
<text x="224" y="391.7" font-size="19.5" fill="#444" font-family="Liberation Sans" text-anchor="middle" >M</text>
<text x="320" y="391.7" font-size="19.5" fill="#444" font-family="Liberation Sans" text-anchor="middle" >N</text>
<text x="416" y="391.7" font-size="19.5" fill="#107c41" font-family="Liberation Sans" text-anchor="middle" >O</text>
<text x="512" y="391.7" font-size="19.5" fill="#444" font-family="Liberation Sans" text-anchor="middle" >P</text>
<text x="608" y="391.7" font-size="19.5" fill="#444" font-family="Liberation Sans" text-anchor="middle" >Q</text>
<text x="704" y="391.7" font-size="19.5" fill="#444" font-family="Liberation Sans" text-anchor="middle" >R</text>
<text x="800" y="391.7" font-size="19.5" fill="#444" font-family="Liberation Sans" text-anchor="middle" >S</text>
<text x="896" y="391.7" font-size="19.5" fill="#444" font-family="Liberation Sans" text-anchor="middle" >T</text>
<text x="992" y="391.7" font-size="19.5" fill="#444" font-family="Liberation Sans" text-anchor="middle" >U</text>
<text x="1088" y="391.7" font-size="19.5" fill="#444" font-family="Liberation Sans" text-anchor="middle" >V</text>
<text x="1184" y="391.7" font-size="19.5" fill="#444" font-family="Liberation Sans" text-anchor="middle" >W</text>
<text x="1280" y="391.7" font-size="19.5" fill="#444" font-family="Liberation Sans" text-anchor="middle" >X</text>
<text x="1376" y="391.7" font-size="19.5" fill="#444" font-family="Liberation Sans" text-anchor="middle" >Y</text>
<rect x="39" y="404" width="1361" height="523" rx="0" fill="#fff" />
<line x1="8" y1="433.5" x2="39" y2="433.5" stroke="#dedede" stroke-width="1" />
<text x="20" y="426.8" font-size="19.5" fill="#3a3a3a" font-family="Liberation Sans" text-anchor="middle" >1</text>
<line x1="8" y1="462.5" x2="39" y2="462.5" stroke="#dedede" stroke-width="1" />
<text x="20" y="455.8" font-size="19.5" fill="#3a3a3a" font-family="Liberation Sans" text-anchor="middle" >2</text>
<line x1="8" y1="491.5" x2="39" y2="491.5" stroke="#dedede" stroke-width="1" />
<text x="20" y="484.8" font-size="19.5" fill="#107c41" font-family="Liberation Sans" text-anchor="middle" >3</text>
<line x1="8" y1="520.5" x2="39" y2="520.5" stroke="#dedede" stroke-width="1" />
<text x="20" y="513.8" font-size="19.5" fill="#3a3a3a" font-family="Liberation Sans" text-anchor="middle" >4</text>
<line x1="8" y1="549.5" x2="39" y2="549.5" stroke="#dedede" stroke-width="1" />
<text x="20" y="542.8" font-size="19.5" fill="#3a3a3a" font-family="Liberation Sans" text-anchor="middle" >5</text>
<line x1="8" y1="578.5" x2="39" y2="578.5" stroke="#dedede" stroke-width="1" />
<text x="20" y="571.8" font-size="19.5" fill="#3a3a3a" font-family="Liberation Sans" text-anchor="middle" >6</text>
<line x1="8" y1="607.5" x2="39" y2="607.5" stroke="#dedede" stroke-width="1" />
<text x="20" y="600.8" font-size="19.5" fill="#3a3a3a" font-family="Liberation Sans" text-anchor="middle" >7</text>
<line x1="8" y1="636.5" x2="39" y2="636.5" stroke="#dedede" stroke-width="1" />
<text x="20" y="629.8" font-size="19.5" fill="#3a3a3a" font-family="Liberation Sans" text-anchor="middle" >8</text>
<line x1="8" y1="665.5" x2="39" y2="665.5" stroke="#dedede" stroke-width="1" />
<text x="20" y="658.8" font-size="19.5" fill="#3a3a3a" font-family="Liberation Sans" text-anchor="middle" >9</text>
<line x1="8" y1="694.5" x2="39" y2="694.5" stroke="#dedede" stroke-width="1" />
<text x="20" y="687.8" font-size="19.5" fill="#3a3a3a" font-family="Liberation Sans" text-anchor="middle" >10</text>
<line x1="8" y1="723.5" x2="39" y2="723.5" stroke="#dedede" stroke-width="1" />
<text x="20" y="716.8" font-size="19.5" fill="#3a3a3a" font-family="Liberation Sans" text-anchor="middle" >11</text>
<line x1="8" y1="752.5" x2="39" y2="752.5" stroke="#dedede" stroke-width="1" />
<text x="20" y="745.8" font-size="19.5" fill="#3a3a3a" font-family="Liberation Sans" text-anchor="middle" >12</text>
<line x1="8" y1="781.5" x2="39" y2="781.5" stroke="#dedede" stroke-width="1" />
<text x="20" y="774.8" font-size="19.5" fill="#3a3a3a" font-family="Liberation Sans" text-anchor="middle" >13</text>
<line x1="8" y1="810.5" x2="39" y2="810.5" stroke="#dedede" stroke-width="1" />
<text x="20" y="803.8" font-size="19.5" fill="#3a3a3a" font-family="Liberation Sans" text-anchor="middle" >14</text>
<line x1="8" y1="839.5" x2="39" y2="839.5" stroke="#dedede" stroke-width="1" />
<text x="20" y="832.8" font-size="19.5" fill="#3a3a3a" font-family="Liberation Sans" text-anchor="middle" >15</text>
<line x1="8" y1="868.5" x2="39" y2="868.5" stroke="#dedede" stroke-width="1" />
<text x="20" y="861.8" font-size="19.5" fill="#3a3a3a" font-family="Liberation Sans" text-anchor="middle" >16</text>
<line x1="8" y1="897.5" x2="39" y2="897.5" stroke="#dedede" stroke-width="1" />
<text x="20" y="890.8" font-size="19.5" fill="#3a3a3a" font-family="Liberation Sans" text-anchor="middle" >17</text>
<line x1="8" y1="926.5" x2="39" y2="926.5" stroke="#dedede" stroke-width="1" />
<text x="20" y="919.8" font-size="19.5" fill="#3a3a3a" font-family="Liberation Sans" text-anchor="middle" >18</text>
<line x1="39.5" y1="404" x2="39.5" y2="927" stroke="#9a9a9a" stroke-width="1" />
<line x1="38" y1="462" x2="38" y2="491" stroke="#107c41" stroke-width="2" />
<line x1="40" y1="433.5" x2="1400" y2="433.5" stroke="#e3e3e3" stroke-width="1" />
<line x1="40" y1="462.5" x2="1400" y2="462.5" stroke="#e3e3e3" stroke-width="1" />
<line x1="40" y1="491.5" x2="1400" y2="491.5" stroke="#e3e3e3" stroke-width="1" />
<line x1="40" y1="520.5" x2="1400" y2="520.5" stroke="#e3e3e3" stroke-width="1" />
<line x1="40" y1="549.5" x2="1400" y2="549.5" stroke="#e3e3e3" stroke-width="1" />
<line x1="40" y1="578.5" x2="1400" y2="578.5" stroke="#e3e3e3" stroke-width="1" />
<line x1="40" y1="607.5" x2="1400" y2="607.5" stroke="#e3e3e3" stroke-width="1" />
<line x1="40" y1="636.5" x2="1400" y2="636.5" stroke="#e3e3e3" stroke-width="1" />
<line x1="40" y1="665.5" x2="1400" y2="665.5" stroke="#e3e3e3" stroke-width="1" />
<line x1="40" y1="694.5" x2="1400" y2="694.5" stroke="#e3e3e3" stroke-width="1" />
<line x1="40" y1="723.5" x2="1400" y2="723.5" stroke="#e3e3e3" stroke-width="1" />
<line x1="40" y1="752.5" x2="1400" y2="752.5" stroke="#e3e3e3" stroke-width="1" />
<line x1="40" y1="781.5" x2="1400" y2="781.5" stroke="#e3e3e3" stroke-width="1" />
<line x1="40" y1="810.5" x2="1400" y2="810.5" stroke="#e3e3e3" stroke-width="1" />
<line x1="40" y1="839.5" x2="1400" y2="839.5" stroke="#e3e3e3" stroke-width="1" />
<line x1="40" y1="868.5" x2="1400" y2="868.5" stroke="#e3e3e3" stroke-width="1" />
<line x1="40" y1="897.5" x2="1400" y2="897.5" stroke="#e3e3e3" stroke-width="1" />
<line x1="80.5" y1="404" x2="80.5" y2="926" stroke="#e3e3e3" stroke-width="1" />
<line x1="176.5" y1="404" x2="176.5" y2="926" stroke="#e3e3e3" stroke-width="1" />
<line x1="272.5" y1="404" x2="272.5" y2="926" stroke="#e3e3e3" stroke-width="1" />
<line x1="368.5" y1="404" x2="368.5" y2="926" stroke="#e3e3e3" stroke-width="1" />
<line x1="464.5" y1="404" x2="464.5" y2="926" stroke="#e3e3e3" stroke-width="1" />
<line x1="560.5" y1="404" x2="560.5" y2="926" stroke="#e3e3e3" stroke-width="1" />
<line x1="656.5" y1="404" x2="656.5" y2="926" stroke="#e3e3e3" stroke-width="1" />
<line x1="752.5" y1="404" x2="752.5" y2="926" stroke="#e3e3e3" stroke-width="1" />
<line x1="848.5" y1="404" x2="848.5" y2="926" stroke="#e3e3e3" stroke-width="1" />
<line x1="944.5" y1="404" x2="944.5" y2="926" stroke="#e3e3e3" stroke-width="1" />
<line x1="1040.5" y1="404" x2="1040.5" y2="926" stroke="#e3e3e3" stroke-width="1" />
<line x1="1136.5" y1="520" x2="1136.5" y2="926" stroke="#e3e3e3" stroke-width="1" />
<line x1="1232.5" y1="404" x2="1232.5" y2="433" stroke="#e3e3e3" stroke-width="1" />
<line x1="1232.5" y1="520" x2="1232.5" y2="926" stroke="#e3e3e3" stroke-width="1" />
<line x1="1328.5" y1="404" x2="1328.5" y2="926" stroke="#e3e3e3" stroke-width="1" />
<g clip-path="url(#gridclip)">
<svg x="40" y="404" width="40" height="29" overflow="hidden">
<text x="3.70" y="22.6" font-size="19.4" fill="#111" font-family="Liberation Sans" textLength="36.41" lengthAdjust="spacingAndGlyphs" stroke="#111" stroke-width="0.3">amp</text>
</svg>
<svg x="40" y="404" width="2" height="29" overflow="hidden">
<text x="-4" y="22.6" font-size="19.4" fill="#111" font-family="Liberation Sans" stroke="#111" stroke-width="0.3">t</text>
</svg>
<svg x="80" y="404" width="96" height="29" overflow="hidden">
<text x="4.5" y="22.6" font-size="19.4" fill="#111" font-family="Liberation Sans" stroke="#111" stroke-width="0.3">order_drive</text>
</svg>
<svg x="272" y="404" width="96" height="29" overflow="hidden">
<text x="4.5" y="22.6" font-size="19.4" fill="#111" font-family="Liberation Sans" stroke="#111" stroke-width="0.3">financial_s</text>
</svg>
<svg x="368" y="404" width="96" height="29" overflow="hidden">
<text x="4.5" y="22.6" font-size="19.4" fill="#111" font-family="Liberation Sans" stroke="#111" stroke-width="0.3">delivery_st</text>
</svg>
<svg x="464" y="404" width="96" height="29" overflow="hidden">
<text x="4.5" y="22.6" font-size="19.4" fill="#111" font-family="Liberation Sans" stroke="#111" stroke-width="0.3">coin_rewa</text>
</svg>
<svg x="560" y="404" width="96" height="29" overflow="hidden">
<text x="4.5" y="22.6" font-size="19.4" fill="#111" font-family="Liberation Sans" stroke="#111" stroke-width="0.3">coin_rewa</text>
</svg>
<svg x="656" y="404" width="96" height="29" overflow="hidden">
<text x="4.5" y="22.6" font-size="19.4" fill="#111" font-family="Liberation Sans" stroke="#111" stroke-width="0.3">coin_spen</text>
</svg>
<svg x="752" y="404" width="96" height="29" overflow="hidden">
<text x="4.5" y="22.6" font-size="19.4" fill="#111" font-family="Liberation Sans" stroke="#111" stroke-width="0.3">credit_spe</text>
</svg>
<svg x="944" y="404" width="96" height="29" overflow="hidden">
<text x="4.5" y="22.6" font-size="19.4" fill="#111" font-family="Liberation Sans" stroke="#111" stroke-width="0.3">internal_ta</text>
</svg>
<text x="180.50" y="426.6" font-size="19.4" fill="#111" font-family="Liberation Sans" textLength="53.96" lengthAdjust="spacingAndGlyphs" stroke="#111" stroke-width="0.3">status</text>
<text x="852.50" y="426.6" font-size="19.4" fill="#111" font-family="Liberation Sans" textLength="35.00" lengthAdjust="spacingAndGlyphs" stroke="#111" stroke-width="0.3">tags</text>
<text x="1044.50" y="426.6" font-size="19.4" fill="#111" font-family="Liberation Sans" textLength="94.20" lengthAdjust="spacingAndGlyphs" stroke="#111" stroke-width="0.3">created_at</text>
<text x="180.50" y="455.6" font-size="19.4" fill="#111" font-family="Liberation Sans" textLength="68.68" lengthAdjust="spacingAndGlyphs" stroke="#111" stroke-width="0.3">pending</text>
<text x="276.50" y="455.6" font-size="19.4" fill="#111" font-family="Liberation Sans" textLength="35.51" lengthAdjust="spacingAndGlyphs" stroke="#111" stroke-width="0.3">paid</text>
<text x="372.50" y="455.6" font-size="19.4" fill="#111" font-family="Liberation Sans" textLength="68.68" lengthAdjust="spacingAndGlyphs" stroke="#111" stroke-width="0.3">pending</text>
<text x="556" y="455.6" font-size="19.4" fill="#111" font-family="Liberation Sans" text-anchor="end" stroke="#111" stroke-width="0.3">49.98</text>
<text x="652" y="455.6" font-size="19.4" fill="#111" font-family="Liberation Sans" text-anchor="end" stroke="#111" stroke-width="0.3">0</text>
<text x="748" y="455.6" font-size="19.4" fill="#111" font-family="Liberation Sans" text-anchor="end" stroke="#111" stroke-width="0.3">0</text>
<text x="844" y="455.6" font-size="19.4" fill="#111" font-family="Liberation Sans" text-anchor="end" stroke="#111" stroke-width="0.3">0</text>
<text x="1044.50" y="455.6" font-size="19.4" fill="#111" font-family="Liberation Sans" textLength="238.19" lengthAdjust="spacingAndGlyphs" stroke="#111" stroke-width="0.3">2025-10-15T07:07:03.459Z</text>
<text x="180.50" y="484.6" font-size="19.4" fill="#111" font-family="Liberation Sans" textLength="68.68" lengthAdjust="spacingAndGlyphs" stroke="#111" stroke-width="0.3">pending</text>
<text x="276.50" y="484.6" font-size="19.4" fill="#111" font-family="Liberation Sans" textLength="35.51" lengthAdjust="spacingAndGlyphs" stroke="#111" stroke-width="0.3">paid</text>
<text x="372.50" y="484.6" font-size="19.4" fill="#111" font-family="Liberation Sans" textLength="68.68" lengthAdjust="spacingAndGlyphs" stroke="#111" stroke-width="0.3">pending</text>
<text x="556" y="484.6" font-size="19.4" fill="#111" font-family="Liberation Sans" text-anchor="end" stroke="#111" stroke-width="0.3">24.99</text>
<text x="652" y="484.6" font-size="19.4" fill="#111" font-family="Liberation Sans" text-anchor="end" stroke="#111" stroke-width="0.3">0</text>
<text x="748" y="484.6" font-size="19.4" fill="#111" font-family="Liberation Sans" text-anchor="end" stroke="#111" stroke-width="0.3">0</text>
<text x="844" y="484.6" font-size="19.4" fill="#111" font-family="Liberation Sans" text-anchor="end" stroke="#111" stroke-width="0.3">0</text>
<text x="1044.50" y="484.6" font-size="19.4" fill="#111" font-family="Liberation Sans" textLength="238.19" lengthAdjust="spacingAndGlyphs" stroke="#111" stroke-width="0.3">2025-10-17T09:12:38.051Z</text>
<text x="180.50" y="513.6" font-size="19.4" fill="#111" font-family="Liberation Sans" textLength="68.68" lengthAdjust="spacingAndGlyphs" stroke="#111" stroke-width="0.3">pending</text>
<text x="276.50" y="513.6" font-size="19.4" fill="#111" font-family="Liberation Sans" textLength="35.51" lengthAdjust="spacingAndGlyphs" stroke="#111" stroke-width="0.3">paid</text>
<text x="372.50" y="513.6" font-size="19.4" fill="#111" font-family="Liberation Sans" textLength="68.68" lengthAdjust="spacingAndGlyphs" stroke="#111" stroke-width="0.3">pending</text>
<text x="556" y="513.6" font-size="19.4" fill="#111" font-family="Liberation Sans" text-anchor="end" stroke="#111" stroke-width="0.3">15.99</text>
<text x="652" y="513.6" font-size="19.4" fill="#111" font-family="Liberation Sans" text-anchor="end" stroke="#111" stroke-width="0.3">0</text>
<text x="748" y="513.6" font-size="19.4" fill="#111" font-family="Liberation Sans" text-anchor="end" stroke="#111" stroke-width="0.3">0</text>
<text x="844" y="513.6" font-size="19.4" fill="#111" font-family="Liberation Sans" text-anchor="end" stroke="#111" stroke-width="0.3">0</text>
<text x="1044.50" y="513.6" font-size="19.4" fill="#111" font-family="Liberation Sans" textLength="238.19" lengthAdjust="spacingAndGlyphs" stroke="#111" stroke-width="0.3">2025-10-21T09:15:43.417Z</text>
</g>
<rect x="368" y="462" width="96" height="29" rx="0" fill="none" stroke="#107c41" stroke-width="2" />
<rect x="461.5" y="488.5" width="6" height="6" rx="0" fill="#107c41" stroke="#fff" stroke-width="1" />
<path d="M656.5,503 h6 v6.5 h6.5 v6 h-6.5 v6.5 h-6 v-6.5 h-6.5 v-6 h6.5 Z" stroke="none" stroke-width="1" fill="#000" />
<path d="M655,501.5 h6.5 v6.5 h6.5 v6.5 h-6.5 v6.5 h-6.5 v-6.5 h-6.5 v-6.5 h6.5 Z" stroke="#000" stroke-width="1.4" fill="#fff" />
<rect x="1400" y="369" width="31" height="558" rx="0" fill="#f0f0f0" />
<rect x="1403" y="369" width="25" height="560" rx="12.5" fill="#f6f6f6" />
<path d="M1410,386.5 L1416,377.5 L1422,386.5 Z" stroke="none" stroke-width="1" fill="#6e6e6e" stroke="#6e6e6e" stroke-width="1.5" stroke-linejoin="round"/>
<rect x="1410" y="395" width="12" height="459" rx="6" fill="#6f6f6f" />
<path d="M1410,912.5 L1416,922 L1422,912.5 Z" stroke="none" stroke-width="1" fill="#6e6e6e" stroke="#6e6e6e" stroke-width="1.5" stroke-linejoin="round"/>
<line x1="1431.5" y1="369" x2="1431.5" y2="974" stroke="#d8d8d8" stroke-width="1" />
<rect x="1432" y="369" width="488" height="605" rx="0" fill="#efefef" />
<rect x="1443" y="383" width="465" height="578" rx="0" fill="#fff" />
<rect x="0" y="927" width="1431" height="47" rx="0" fill="#e6e6e6" />
<path d="M43,943 L36,950 L43,957" stroke="#9a9a9a" stroke-width="1.4" fill="none" />
<path d="M85,943 L92,950 L85,957" stroke="#9a9a9a" stroke-width="1.4" fill="none" />
<rect x="166" y="927.5" width="356" height="40.5" rx="7" fill="#fff" />
<text x="178.00" y="954.7" font-size="20.5" fill="#1a1a1a" font-family="Liberation Sans" textLength="330.95" lengthAdjust="spacingAndGlyphs" stroke="#1a1a1a" stroke-width="0.4">b17d680c-af2d-4747-a5fd-eac1e9b</text>
<rect x="178" y="962" width="331" height="3.2" rx="1" fill="#107c41" />
<line x1="527.5" y1="937" x2="527.5" y2="967" stroke="#cfcfcf" stroke-width="1" />
<path d="M599.5,941.5 V958.5 M591,950 H608" stroke="#444" stroke-width="1.5" fill="none" />
<circle cx="864" cy="945" r="1.8" fill="#333" />
<circle cx="864" cy="951.5" r="1.8" fill="#333" />
<circle cx="864" cy="958" r="1.8" fill="#333" />
<rect x="888.7" y="937.5" width="513.3" height="25.5" rx="12.75" fill="#f5f5f5" />
<path d="M903.5,944.5 L896,950.5 L903.5,956.5 Z" stroke="none" stroke-width="1" fill="#6e6e6e" stroke="#6e6e6e" stroke-width="1.2" stroke-linejoin="round"/>
<rect x="1107" y="944" width="269.5" height="12" rx="6" fill="#707070" />
<path d="M1385.5,944.5 L1393,950.5 L1385.5,956.5 Z" stroke="none" stroke-width="1" fill="#6e6e6e" stroke="#6e6e6e" stroke-width="1.2" stroke-linejoin="round"/>
<rect x="0" y="974" width="1920" height="34" rx="0" fill="#f3f3f3" />
<text x="17.80" y="998" font-size="15.5" fill="#444" font-family="Liberation Sans" textLength="42.01" lengthAdjust="spacingAndGlyphs" >Ready</text>
<circle cx="97.3" cy="984.8" r="2.6" fill="none" stroke="#222" stroke-width="1.3" />
<path d="M92,985.5 C90,985 88.5,987 90,988.5 L93.5,990 L92,1000 C91.5,1002 94.5,1002.5 95,1000.5 L97.5,995 L100.5,1001.5 M101,990 L104.5,988.2 C106.5,987 106,984.5 103.5,985.3 C101.5,986 99.5,987.6 97.3,987.6 C95,987.6 93.5,986 92,985.5" stroke="#222" stroke-width="1.3" fill="none" stroke-linejoin="round" stroke-linecap="round"/>
<path d="M102.5,993.5 C102.5,990.5 108.5,990.5 108.5,993.5 C108.5,995.8 105.6,996 105.6,999" stroke="#222" stroke-width="1.4" fill="none" stroke-linecap="round"/>
<circle cx="105.6" cy="1001.6" r="0.9" fill="#222" />
<text x="115.30" y="998" font-size="15.5" fill="#444" font-family="Liberation Sans" textLength="171.45" lengthAdjust="spacingAndGlyphs" >Accessibility: Unavailable</text>
<rect x="1473.75" y="975" width="60" height="33" rx="0" fill="#e0e0e0" />
<rect x="1493.5" y="982.5" width="19" height="18" rx="0" fill="none" stroke="#333" stroke-width="1.6" />
<path d="M1493.5,988.5 H1512.5 M1493.5,994.5 H1512.5 M1499.8,982.5 V1000.5 M1506.2,982.5 V1000.5" stroke="#333" stroke-width="1.4" fill="none" />
<rect x="1554" y="982.5" width="20" height="18" rx="0" fill="none" stroke="#333" stroke-width="1.5" />
<rect x="1558" y="986" width="12" height="11" rx="0" fill="none" stroke="#333" stroke-width="1.2" />
<path d="M1560,989 H1568 M1560,991.5 H1568 M1560,994 H1568" stroke="#333" stroke-width="1" fill="none" />
<rect x="1614" y="982.5" width="20" height="18" rx="0" fill="none" stroke="#333" stroke-width="1.5" />
<path d="M1621,982.5 V992 H1627 V982.5" stroke="#333" stroke-width="1.4" fill="none" />
<line x1="1662" y1="991.5" x2="1673" y2="991.5" stroke="#555" stroke-width="1.3" />
<line x1="1682" y1="992" x2="1830" y2="992" stroke="#777" stroke-width="1.5" />
<rect x="1752" y="983" width="8" height="17" rx="0" fill="#666" />
<path d="M1843.5,985.5 V998 M1837,991.7 H1850" stroke="#555" stroke-width="1.3" fill="none" />
<text x="1868.75" y="998" font-size="15.5" fill="#555" font-family="Liberation Sans" textLength="38.71" lengthAdjust="spacingAndGlyphs" >100%</text>
<rect x="0" y="1008" width="1920" height="72" rx="0" fill="#1f1f1f" />
<path d="M37,1023 L55,1018 V1058 L37,1062 Z" stroke="none" stroke-width="1" fill="#d8611b" />
<path d="M33,1032 C40,1030 50,1034 62,1032 M33,1041 C40,1039 50,1043 62,1041 M33,1050 C40,1048 50,1052 62,1050" stroke="#f0a060" stroke-width="2.2" fill="none" />
<circle cx="57.5" cy="1024.5" r="11" fill="#c42b1c" />
<text x="53.30" y="1030.3" font-size="14" fill="#fff" font-family="Liberation Sans" textLength="8.44" lengthAdjust="spacingAndGlyphs" >5</text>
<text x="77.00" y="1038" font-size="16.8" fill="#fff" font-family="Liberation Sans" textLength="111.04" lengthAdjust="spacingAndGlyphs" >Air: Moderate</text>
<text x="76.30" y="1061.3" font-size="16.8" fill="#cfcfcf" font-family="Liberation Sans" textLength="36.82" lengthAdjust="spacingAndGlyphs" >Now</text>
<rect x="517.5" y="1027" width="17" height="16.5" rx="1" fill="#3ab6f0" />
<rect x="536" y="1027" width="17" height="16.5" rx="1" fill="#3ab6f0" />
<rect x="517.5" y="1045.5" width="17" height="16.5" rx="1" fill="#3ab6f0" />
<rect x="536" y="1045.5" width="17" height="16.5" rx="1" fill="#3ab6f0" />
<rect x="575" y="1021.8" width="325.75" height="44" rx="22" fill="#f0f0f0" />
<circle cx="601" cy="1042" r="7.2" fill="none" stroke="#222" stroke-width="2" />
<line x1="606" y1="1047" x2="612" y2="1053" stroke="#222" stroke-width="2.2" />
<text x="629.50" y="1052" font-size="20" fill="#5e5e5e" font-family="Liberation Sans" textLength="59.97" lengthAdjust="spacingAndGlyphs" >Search</text>
<path d="M843,1038 C843,1046 848,1048 854,1048 C861,1048 865,1045 865,1038 Z" stroke="none" stroke-width="1" fill="#2e3236" />
<path d="M829.3,1041.5 L849,1031 L874,1028.8 L858,1038.5 Z" stroke="none" stroke-width="1" fill="#3a3e42" />
<path d="M841,1041 L840.5,1057 L844,1057.5 L843.5,1040.5 Z" stroke="none" stroke-width="1" fill="#e0b42a" />
<path d="M849,1053 L881,1042 C884,1041.5 885.5,1044 884.5,1047 L852,1058.5 C849,1059.5 847,1055 849,1053 Z" stroke="none" stroke-width="1" fill="#e4dcc6" />
<path d="M867.5,1047 L872.5,1045.5 L874,1054 L869,1055 Z" stroke="none" stroke-width="1" fill="#d62c2c" />
<circle cx="870.8" cy="1049.8" r="2.2" fill="#d9c27a" />
<rect x="921" y="1036.3" width="27" height="24.2" rx="2.5" fill="#6b6b6b" />
<rect x="929.8" y="1027" width="27.2" height="24.6" rx="2.5" fill="#f2f2f2" />
<rect x="929.8" y="1036.3" width="18.2" height="15.3" rx="0" fill="#c2c2c2" />
<linearGradient id="cpA" x1="0" y1="0" x2="0" y2="1"><stop offset="0" stop-color="#2b86f0"/><stop offset="0.5" stop-color="#3cc488"/><stop offset="1" stop-color="#f4c21c"/></linearGradient>
<linearGradient id="cpB" x1="0" y1="0" x2="0" y2="1"><stop offset="0" stop-color="#a86cf0"/><stop offset="0.5" stop-color="#f2609c"/><stop offset="1" stop-color="#f9a55a"/></linearGradient>
<path d="M997,1029 H1010.5 Q1014.5,1029 1013.5,1033 L1007,1050.5 H992.5 Q988,1050.5 989,1046.5 L993.5,1032.5 Q994.5,1029 997,1029 Z" stroke="none" stroke-width="1" fill="url(#cpA)" />
<path d="M1008.5,1037 H1018.5 Q1022.5,1037 1021.5,1041 L1016.5,1056 Q1015.5,1059 1012,1059 H998.5 Q994.5,1059 995.5,1055 L1003,1040 Q1004.5,1037 1008.5,1037 Z" stroke="none" stroke-width="1" fill="url(#cpB)" />
<path d="M1053,1029 H1066 L1069,1032 H1089 V1060 H1053 Z" stroke="none" stroke-width="1" fill="#f7c842" />
<rect x="1053" y="1035" width="36" height="25" rx="1" fill="#ffd95a" />
<rect x="1061" y="1049" width="20" height="11" rx="2" fill="#1e7bd6" />
<line x1="1065" y1="1054" x2="1077" y2="1054" stroke="#0e4f93" stroke-width="2" />
<circle cx="1136.6" cy="1044" r="18" fill="#e33b2e" />
<path d="M1136.6,1044 L1120.9,1053 A18,18 0 0 0 1145.6,1059.6 Z" stroke="none" stroke-width="1" fill="#2ca24d" />
<path d="M1136.6,1044 L1145.6,1059.6 A18,18 0 0 0 1152.2,1035 L1136.6,1035 Z" stroke="none" stroke-width="1" fill="#fbc117" />
<path d="M1136.6,1044 L1152.2,1035 A18,18 0 0 0 1121,1035 Z" stroke="none" stroke-width="1" fill="#e33b2e" />
<path d="M1121,1035 A18,18 0 0 0 1120.9,1053 L1129,1048.5 Z" stroke="none" stroke-width="1" fill="#2ca24d" />
<circle cx="1136.6" cy="1044" r="8" fill="#fff" />
<circle cx="1136.6" cy="1044" r="6.3" fill="#2f76e8" />
<rect x="1132" y="1068.5" width="9" height="4" rx="2" fill="#9a9a9a" />
<circle cx="1202.7" cy="1044" r="17" fill="#f4f4f4" />
<rect x="1197.5" y="1033" width="4" height="9" rx="2" fill="#36c5f0" />
<rect x="1191" y="1038" width="9" height="4" rx="2" fill="#36c5f0" />
<rect x="1204" y="1035" width="4" height="9" rx="2" fill="#2eb67d" />
<rect x="1204" y="1040" width="10" height="4" rx="2" fill="#2eb67d" />
<rect x="1204" y="1046" width="4" height="9" rx="2" fill="#ecb22e" />
<rect x="1205" y="1046" width="9" height="4" rx="2" fill="#ecb22e" />
<rect x="1197.5" y="1045" width="4" height="10" rx="2" fill="#e01e5a" />
<rect x="1191" y="1046" width="10" height="4" rx="2" fill="#e01e5a" />
<rect x="1198" y="1068.5" width="9" height="4" rx="2" fill="#9a9a9a" />
<path d="M1252,1060 L1255.5,1049 A17,17 0 1 1 1262,1056 Z" stroke="#25d366" stroke-width="3" fill="none" />
<path d="M1262,1036 C1260,1040 1264,1048 1273,1052 C1276,1053 1278,1051 1278,1049 L1274,1046 L1272,1048 C1269,1047 1266,1044 1265,1041 L1267,1039 L1264,1035 C1263,1035 1262,1035.5 1262,1036 Z" stroke="none" stroke-width="1" fill="#25d366" />
<rect x="1264" y="1068.5" width="9" height="4" rx="2" fill="#9a9a9a" />
<rect x="1306" y="1015" width="52" height="58" rx="5" fill="#2d2d2d" />
<rect x="1352" y="1015" width="6" height="58" rx="2" fill="#262626" />
<rect x="1317" y="1027" width="31" height="32" rx="2" fill="#1f7a35" />
<rect x="1317" y="1027" width="15" height="12" rx="0" fill="#4fc35a" />
<rect x="1332" y="1027" width="16" height="12" rx="0" fill="#a5e26a" />
<rect x="1313" y="1043" width="16" height="16" rx="2" fill="#185c37" />
<text x="1316.50" y="1056" font-size="11" fill="#fff" font-family="Liberation Sans" font-weight="bold" textLength="8.96" lengthAdjust="spacingAndGlyphs" >X</text>
<rect x="1323" y="1069" width="23" height="4" rx="2" fill="#4cc2ff" />
<path d="M1470.5,1048 L1478.5,1040 L1486.5,1048" stroke="#fff" stroke-width="1.8" fill="none" stroke-linecap="round" stroke-linejoin="round"/>
<path d="M1518,1052 C1512,1052 1512,1043 1518,1043 C1519,1036 1530,1035 1532,1042 C1538,1042 1538,1052 1532,1052 Z" stroke="none" stroke-width="1" fill="#bdbdbd" />
<circle cx="1532" cy="1049" r="7" fill="#1e7be0" />
<text x="1530.50" y="1054" font-size="9" fill="#fff" font-family="Liberation Sans" font-weight="bold" textLength="2.48" lengthAdjust="spacingAndGlyphs" >i</text>
<rect x="1569" y="1032" width="10" height="17" rx="5" fill="none" stroke="#6fc0e6" stroke-width="1.8" />
<path d="M1565.5,1043 C1565.5,1052 1582.5,1052 1582.5,1043 M1574,1051 V1056" stroke="#6fc0e6" stroke-width="1.8" fill="none" />
<text x="1615.00" y="1040" font-size="16.8" fill="#fff" font-family="Liberation Sans" textLength="34.95" lengthAdjust="spacingAndGlyphs" >ENG</text>
<text x="1623.00" y="1062" font-size="16.8" fill="#fff" font-family="Liberation Sans" textLength="17.00" lengthAdjust="spacingAndGlyphs" >IN</text>
<rect x="1678" y="1033" width="17" height="16" rx="1" fill="none" stroke="#fff" stroke-width="1.5" />
<path d="M1683,1053 H1695 M1689,1049 V1053" stroke="#fff" stroke-width="1.5" fill="none" />
<rect x="1695" y="1033" width="6" height="9" rx="1" fill="#1f1f1f" stroke="#fff" stroke-width="1.3" />
<line x1="1698" y1="1042" x2="1698" y2="1056" stroke="#fff" stroke-width="1.4" />
<path d="M1713,1040 H1718 L1724,1034 V1054 L1718,1048 H1713 Z" stroke="#fff" stroke-width="1.5" fill="none" stroke-linejoin="round"/>
<path d="M1728,1039 C1731,1042 1731,1046 1728,1049 M1731.5,1036 C1736,1041 1736,1047 1731.5,1052 M1735,1033 C1741,1040 1741,1048 1735,1055" stroke="#fff" stroke-width="1.4" fill="none" />
<rect x="1749.8" y="1037" width="19.5" height="14" rx="3" fill="none" stroke="#fff" stroke-width="1.6" />
<rect x="1769.5" y="1041.5" width="3.5" height="6" rx="1" fill="#fff" />
<path d="M1754,1039.5 H1766 Q1767,1039.5 1767,1040.5 V1047.5 Q1767,1048.5 1766,1048.5 H1752.5 V1045 Z" stroke="none" stroke-width="1" fill="#fff" />
<path d="M1754.5,1031.5 L1750.5,1039.5 H1754 L1751.5,1045" stroke="#fff" stroke-width="1.6" fill="none" stroke-linejoin="round"/>
<path d="M1748.5,1034 V1040 M1748,1041.5 L1757,1037.5" stroke="#1f1f1f" stroke-width="1.2" fill="none" />
<text x="1848.00" y="1037.5" font-size="16.8" fill="#fff" font-family="Liberation Sans" textLength="42.04" lengthAdjust="spacingAndGlyphs" >10:55</text>
<text x="1798.00" y="1062" font-size="16.8" fill="#fff" font-family="Liberation Sans" textLength="91.93" lengthAdjust="spacingAndGlyphs" >11-11-2025</text>
</svg></body></html>
